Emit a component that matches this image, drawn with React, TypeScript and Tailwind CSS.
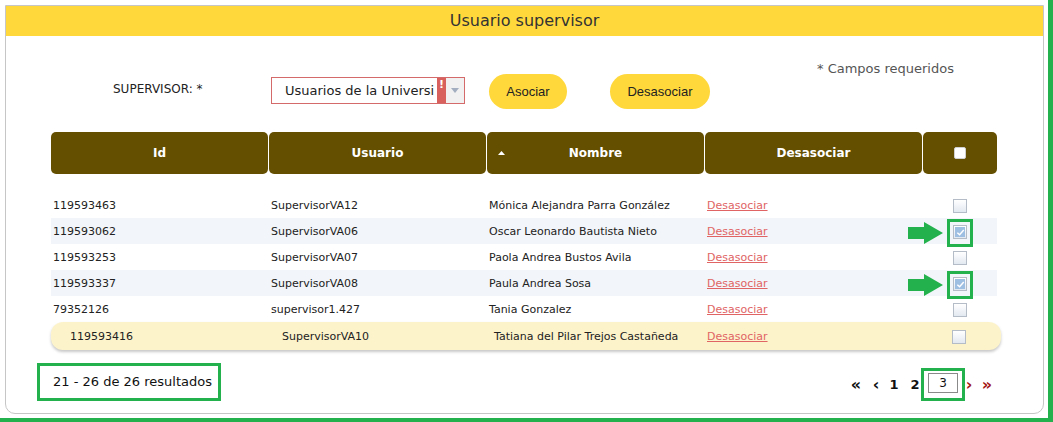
import React from "react";

interface IRow {
    id: string;
    user: string;
    name: string;
    checked?: boolean;
}

const rows: IRow[] = [
    { id: "119593463", user: "SupervisorVA12", name: "Mónica Alejandra Parra González" },
    { id: "119593062", user: "SupervisorVA06", name: "Oscar Leonardo Bautista Nieto", checked: true },
    { id: "119593253", user: "SupervisorVA07", name: "Paola Andrea Bustos Avila" },
    { id: "119593337", user: "SupervisorVA08", name: "Paula Andrea Sosa", checked: true },
    { id: "79352126", user: "supervisor1.427", name: "Tania Gonzalez" },
];

function CheckBox({ checked }: { checked?: boolean }) {
    return (
        <span className="flex h-[14px] w-[14px] items-center justify-center border border-[#b4bcc7] bg-linear-to-b from-white to-[#e3e9f1]">
            {checked && (
                <span className="flex h-[10px] w-[10px] items-center justify-center bg-[#9fbfe2]">
                    <svg viewBox="0 0 10 10" width="9" height="9">
                        <path d="M1.5 5.2 L4 7.5 L8.6 2.2" fill="none" stroke="#ffffff" strokeWidth="1.6" />
                    </svg>
                </span>
            )}
        </span>
    );
}

function Marker() {
    // green annotation: arrow + frame round the checked box
    return (
        <>
            <svg className="absolute left-[-15px] top-[2px]" width="35" height="22" viewBox="0 0 35 22">
                <polygon points="0,5 16,5 16,0 35,11 16,22 16,17 0,17" fill="#22b14c" />
            </svg>
            <span className="absolute left-[24px] top-[-1px] h-[28px] w-[26px] border-[3px] border-[#22b14c]"></span>
        </>
    );
}

export default function App() {
    return (
        <div className="h-[422px] w-[1053px] overflow-hidden border-r-[5px] border-b-[4px] border-[#22b14c] bg-white font-['DejaVu_Sans',sans-serif] text-[#222]">
            <div className="ml-[5px] mt-[5px] flex h-[409px] w-[1039px] flex-col rounded-b-[10px] border border-[#c6c6c6]">
                <div className="flex h-[30px] items-center justify-center bg-[#ffd83b] text-[16px] text-[#333]">
                    Usuario supervisor
                </div>

                <div className="flex h-[96px] items-start pl-[107px]">
                    <span className="mt-[46px] w-[158px] text-[12px] leading-[15px]">SUPERVISOR: *</span>
                    <div className="mt-[41px] flex h-[27px] w-[194px] border border-[#d46a6a] bg-white">
                        <span className="w-[165px] overflow-hidden whitespace-nowrap pl-[13px] text-[13px] leading-[25px]">
                            Usuarios de la Universi
                        </span>
                        <span className="flex w-[9px] items-start justify-center bg-[#d8615d] text-[11px] font-bold leading-[14px] text-white">
                            !
                        </span>
                        <span className="flex w-[18px] items-center justify-center bg-[#f1f1f1]">
                            <svg width="8" height="5" viewBox="0 0 8 5">
                                <polygon points="0,0 8,0 4,5" fill="#a3aec0" />
                            </svg>
                        </span>
                    </div>
                    <button className="ml-[24px] mt-[38px] h-[35px] w-[78px] rounded-full bg-[#ffd83b] font-['Liberation_Sans',sans-serif] text-[13px] text-[#222]">
                        Asociar
                    </button>
                    <button className="ml-[43px] mt-[38px] h-[35px] w-[100px] rounded-full bg-[#ffd83b] font-['Liberation_Sans',sans-serif] text-[13px] text-[#222]">
                        Desasociar
                    </button>
                    <span className="ml-[107px] mt-[25px] text-[13px] leading-[16px] text-[#555]">* Campos requeridos</span>
                </div>

                <div className="ml-[45px]">
                    <div className="grid h-[42px] grid-cols-[217px_217px_217px_217px_74px] gap-x-px text-[12px] font-bold text-white">
                        <div className="flex items-center justify-center rounded-[5px] bg-[#644f00]">Id</div>
                        <div className="flex items-center justify-center rounded-[5px] bg-[#644f00]">Usuario</div>
                        <div className="relative flex items-center justify-center rounded-[5px] bg-[#644f00]">
                            <svg className="absolute left-[11px] top-[19px]" width="7" height="4" viewBox="0 0 7 4">
                                <polygon points="0,4 7,4 3.5,0" fill="#ffffff" />
                            </svg>
                            Nombre
                        </div>
                        <div className="flex items-center justify-center rounded-[5px] bg-[#644f00]">Desasociar</div>
                        <div className="flex items-center justify-center rounded-[5px] bg-[#644f00]">
                            <span className="h-[12px] w-[12px] rounded-[2px] border border-[#d0d0d0] bg-white"></span>
                        </div>
                    </div>

                    <div className="mt-[18px] text-[11px]">
                        {rows.map((r, i) => (
                            <div
                                key={r.id}
                                className={`grid h-[26px] w-[946px] grid-cols-[217px_217px_217px_217px_74px] gap-x-px items-center pt-[2px] ${i % 2 === 1 ? "bg-[#f2f5f9]" : "bg-white"}`}
                            >
                                <span className="pl-[2px]">{r.id}</span>
                                <span className="pl-[2px]">{r.user}</span>
                                <span className="pl-[2px]">{r.name}</span>
                                <span className="pl-[2px]">
                                    <a className="text-[#e06464] underline">Desasociar</a>
                                </span>
                                <span className="relative flex h-[24px] items-center justify-center">
                                    {r.checked && <Marker />}
                                    <CheckBox checked={r.checked} />
                                </span>
                            </div>
                        ))}
                        <div className="grid h-[28px] w-[950px] grid-cols-[217px_217px_217px_217px_78px] gap-x-px items-center rounded-[12px] bg-[#fdf3cb] pt-[2px] shadow-[0_2px_3px_rgba(0,0,0,0.22)]">
                            <span className="pl-[19px]">119593416</span>
                            <span className="pl-[13px]">SupervisorVA10</span>
                            <span className="pl-[7px]">Tatiana del Pilar Trejos Castañeda</span>
                            <span className="pl-[2px]">
                                <a className="text-[#e06464] underline">Desasociar</a>
                            </span>
                            <span className="flex justify-center pr-[6px]">
                                <CheckBox />
                            </span>
                        </div>
                    </div>
                </div>

                <div className="flex items-start">
                    <div className="ml-[31px] mt-[13px] flex h-[38px] w-[184px] items-center border-[3px] border-[#22b14c] pl-[13px] text-[13px] text-[#111]">
                        21 - 26 de 26 resultados
                    </div>
                    <div className="ml-auto mr-[50px] mt-[18px] flex items-center text-[13px] font-bold">
                        <span className="w-[12px] text-center text-[16px] text-[#111]">«</span>
                        <span className="ml-[10px] w-[8px] text-center text-[16px] text-[#111]">‹</span>
                        <span className="ml-[9px] w-[10px] text-center text-[#111]">1</span>
                        <span className="ml-[11px] w-[10px] text-center text-[#111]">2</span>
                        <span className="ml-px flex h-[33px] w-[44px] items-start justify-center border-[3px] border-[#22b14c] pt-[2px]">
                            <span className="flex h-[20px] w-[30px] items-center justify-center border border-[#8a8a8a] text-[12px] font-normal text-[#111]">
                                3
                            </span>
                        </span>
                        <span className="w-[8px] text-center text-[16px] text-[#a31515]">›</span>
                        <span className="ml-[8px] w-[12px] text-center text-[16px] text-[#a31515]">»</span>
                    </div>
                </div>
            </div>
        </div>
    );
}
